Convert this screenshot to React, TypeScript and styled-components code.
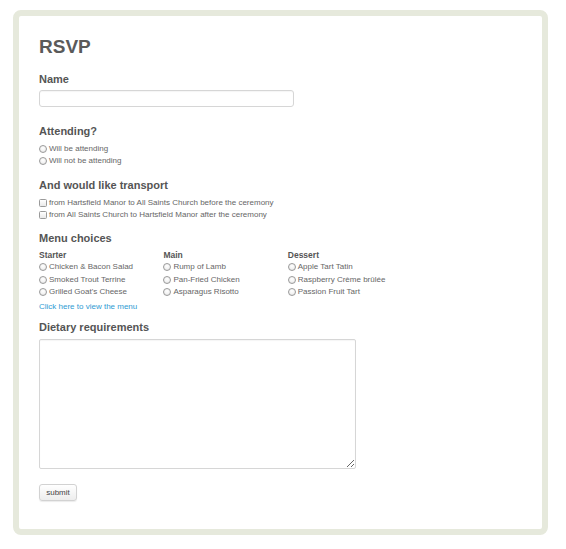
import React from "react";
import styled, { createGlobalStyle } from "styled-components";

const Global = createGlobalStyle`
  html, body { margin: 0; padding: 0; background: #ffffff; }
  body { font-family: "Liberation Sans", Arial, Helvetica, sans-serif; }
`;

const Page = styled.div`
  padding: 10px 18px 14px 13px;
`;

const Card = styled.form`
  box-sizing: border-box;
  width: 535px;
  height: 525px;
  border: 6px solid #e6e9dc;
  border-radius: 8px;
  background: #fff;
  padding: 20px 20px 0 20px;
  display: flex;
  flex-direction: column;
  align-items: flex-start;
`;

const Title = styled.h1`
  margin: 0;
  font-size: 19px;
  line-height: 22px;
  font-weight: bold;
  color: #5a5a5a;
`;

const Label = styled.h2<{ $mt: number }>`
  margin: ${(p) => p.$mt}px 0 0 0;
  font-size: 11px;
  line-height: 14px;
  font-weight: bold;
  color: #555;
`;

const TextInput = styled.input`
  box-sizing: border-box;
  margin-top: 4px;
  width: 255px;
  height: 17px;
  border: 1px solid #d6d6d6;
  border-radius: 3px;
  background: #fff;
  padding: 0 3px;
  font: 8px "Liberation Sans", Arial, sans-serif;
  box-shadow: inset 0 1px 1px rgba(0, 0, 0, 0.04);
  outline: none;
`;

const OptionList = styled.div<{ $mt: number }>`
  margin-top: ${(p) => p.$mt}px;
  display: flex;
  flex-direction: column;
`;

const Option = styled.label<{ $h?: number }>`
  display: flex;
  align-items: center;
  height: ${(p) => p.$h ?? 12}px;
  font-size: 8px;
  line-height: 12px;
  color: #666;
  white-space: nowrap;
`;

const Radio = styled.span`
  box-sizing: border-box;
  width: 8px;
  height: 8px;
  border-radius: 50%;
  border: 1px solid #9a9a9a;
  background: radial-gradient(circle at 50% 35%, #ffffff 0%, #f2f2f2 55%, #d9d9d9 100%);
  margin-right: 2px;
  flex: none;
`;

const Check = styled.span`
  box-sizing: border-box;
  width: 8px;
  height: 8px;
  border-radius: 1.5px;
  border: 1px solid #9a9a9a;
  background: linear-gradient(#ffffff, #e9e9e9);
  margin-right: 2px;
  flex: none;
`;

const MenuGrid = styled.div`
  margin-top: 4.5px;
  display: grid;
  grid-template-columns: repeat(3, 124.4px);
`;

const Course = styled.div`
  display: flex;
  flex-direction: column;
`;

const CourseTitle = styled.div`
  font-size: 8.5px;
  line-height: 10px;
  font-weight: bold;
  color: #555;
  margin-bottom: 1.5px;
`;

const Link = styled.a`
  margin-top: 3px;
  font-size: 8px;
  line-height: 12px;
  color: #2f9bd3;
  text-decoration: none;
`;

const TextArea = styled.textarea`
  box-sizing: border-box;
  margin-top: 5px;
  width: 317px;
  height: 130px;
  border: 1px solid #d6d6d6;
  border-radius: 2px;
  background: #fff;
  box-shadow: inset 0 1px 1px rgba(0, 0, 0, 0.04);
  outline: none;
  font: 8px "Liberation Sans", Arial, sans-serif;
`;

const Submit = styled.button`
  box-sizing: border-box;
  margin-top: 15px;
  width: 38px;
  height: 17.5px;
  padding: 0;
  border: 1px solid #d2d2d2;
  border-radius: 3px;
  background: linear-gradient(#ffffff, #ededed);
  box-shadow: 0 1px 1px rgba(0, 0, 0, 0.08);
  font: 8px "Liberation Sans", Arial, sans-serif;
  color: #444;
`;

const courses = [
  { title: "Starter", items: ["Chicken & Bacon Salad", "Smoked Trout Terrine", "Grilled Goat's Cheese"] },
  { title: "Main", items: ["Rump of Lamb", "Pan-Fried Chicken", "Asparagus Risotto"] },
  { title: "Dessert", items: ["Apple Tart Tatin", "Raspberry Crème brûlée", "Passion Fruit Tart"] },
];

export default function App() {
  return (
    <>
      <Global />
      <Page>
        <Card onSubmit={(e) => e.preventDefault()}>
          <Title>RSVP</Title>
          <Label $mt={14}>Name</Label>
          <TextInput type="text" />
          <Label $mt={17}>Attending?</Label>
          <OptionList $mt={4.5}>
            <Option><Radio />Will be attending</Option>
            <Option><Radio />Will not be attending</Option>
          </OptionList>
          <Label $mt={11.5}>And would like transport</Label>
          <OptionList $mt={4.5}>
            <Option><Check />from Hartsfield Manor to All Saints Church before the ceremony</Option>
            <Option><Check />from All Saints Church to Hartsfield Manor after the ceremony</Option>
          </OptionList>
          <Label $mt={10.8}>Menu choices</Label>
          <MenuGrid>
            {courses.map((c) => (
              <Course key={c.title}>
                <CourseTitle>{c.title}</CourseTitle>
                {c.items.map((it) => (
                  <Option key={it} $h={12.3}><Radio />{it}</Option>
                ))}
              </Course>
            ))}
          </MenuGrid>
          <Link href="#">Click here to view the menu</Link>
          <Label $mt={6.8}>Dietary requirements</Label>
          <TextArea />
          <Submit type="submit">submit</Submit>
        </Card>
      </Page>
    </>
  );
}
